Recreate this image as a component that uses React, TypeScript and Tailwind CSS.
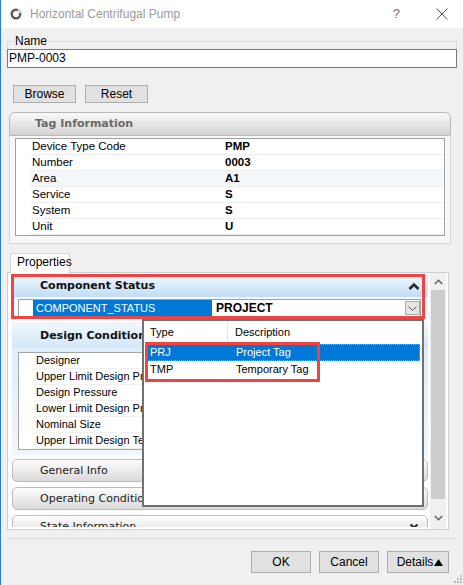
const tagRows: [string, string][] = [
  ['Device Type Code', 'PMP'],
  ['Number', '0003'],
  ['Area', 'A1'],
  ['Service', 'S'],
  ['System', 'S'],
  ['Unit', 'U'],
];

const designRows = [
  'Designer',
  'Upper Limit Design Pressure',
  'Design Pressure',
  'Lower Limit Design Pressure',
  'Nominal Size',
  'Upper Limit Design Temperature',
];

const lookupRows = [
  { type: 'PRJ', desc: 'Project Tag', selected: true },
  { type: 'TMP', desc: 'Temporary Tag', selected: false },
];

function CollapsedHeader({ title, chevron }: { title: string; chevron?: boolean }) {
  return (
    <div className="flex h-[23px] w-[416px] shrink-0 rounded-[5px] border border-[#bdbdbd] bg-linear-to-b from-[#fdfdfd] to-[#dadada] pl-[27px] font-['DejaVu_Sans',Verdana,sans-serif] text-[11px] leading-[21px] text-[#222]">
      <span>{title}</span>
      {chevron && (
        <svg className="ml-auto mr-[8px] mt-[7px]" width="10" height="10" viewBox="0 0 10 10">
          <polyline points="1.5,1.5 5,4.5 8.5,1.5" fill="none" stroke="#2a2a2a" strokeWidth="2.2" />
          <polyline points="1.5,5.5 5,8.5 8.5,5.5" fill="none" stroke="#2a2a2a" strokeWidth="2.2" />
        </svg>
      )}
    </div>
  );
}

function Button({ label, className }: { label: React.ReactNode; className: string }) {
  return (
    <div className={`flex items-center justify-center border border-[#adadad] bg-[#e1e1e1] text-[12px] ${className}`}>
      {label}
    </div>
  );
}

export default function App() {
  return (
    <div className="relative h-[585px] w-[464px] overflow-hidden border-l border-r border-l-[#2b7cd3] border-r-[#d9d9d9] bg-[#f0f0f0] font-['Liberation_Sans',Arial,sans-serif] text-black">
      {/* title bar */}
      <div className="flex h-[28px] items-center bg-white">
        <svg className="ml-[9px]" width="12" height="12" viewBox="0 0 12 12">
          <circle cx="6" cy="6" r="4.3" fill="none" stroke="#5a5a5a" strokeWidth="2.4" />
          <path d="M7.6 2 A4.3 4.3 0 0 1 10.2 5" fill="none" stroke="#d6d6d6" strokeWidth="2.6" />
        </svg>
        <span className="ml-[8px] text-[12px] text-[#9a9a9a]">Horizontal Centrifugal Pump</span>
        <span className="ml-auto text-[13px] text-[#707070]">?</span>
        <svg className="ml-[36px] mr-[15px]" width="12" height="12" viewBox="0 0 12 12">
          <path d="M0.5 0.5 L11.5 11.5 M11.5 0.5 L0.5 11.5" stroke="#555" strokeWidth="1" />
        </svg>
      </div>

      {/* name */}
      <fieldset className="ml-[6px] mt-[6px] w-[450px] border-x border-t border-[#dcdcdc]">
        <legend className="ml-[6px] px-[1px] text-[12px] leading-[14px]">Name</legend>
        <div className="-mx-px mt-px h-[19px] w-[450px] border border-[#7a7a7a] bg-white pl-[1px] text-[12px] leading-[17px]">
          PMP-0003
        </div>
      </fieldset>

      <div className="ml-[12px] mt-[17px] flex gap-[9px]">
        <Button label="Browse" className="h-[18px] w-[63px]" />
        <Button label="Reset" className="h-[18px] w-[63px]" />
      </div>

      {/* tag information */}
      <div className="ml-[8px] mt-[9px] w-[442px]">
        <div className="flex h-[24px] items-center rounded-t-[6px] border border-[#b9b9b9] bg-linear-to-b from-[#f9f9f9] to-[#d3d3d3] pl-[25px] font-['DejaVu_Sans',Verdana,sans-serif] text-[11px] font-bold text-[#6a6a6a]">
          Tag Information
        </div>
        <div className="border-x border-b border-[#d4d4d4] bg-[#f8f8f8] pb-[7px] pl-[5px] pt-[2px]">
          <div className="h-[98px] w-[430px] border border-[#a0a0a0] bg-white text-[11.5px]">
            {tagRows.map(([label, value]) => (
              <div key={label} className={`flex h-[16px] ${label === 'Area' ? 'bg-[#f5f8fb]' : ''}`}>
                <div className="w-[14px] shrink-0 bg-white" />
                <div className="flex flex-1 border-b border-[#efefef] leading-[15px]">
                  <span className="w-[195px] pl-[2px]">{label}</span>
                  <span className="font-bold">{value}</span>
                </div>
              </div>
            ))}
          </div>
        </div>
      </div>

      {/* properties tab */}
      <div className="relative z-10 ml-[9px] mt-[9px] h-[20px] w-[60px] border-x border-t border-[#d9d9d9] bg-white pl-[6px] text-[12px] leading-[16px]">
        Properties
      </div>
      <div className="-mt-px ml-[6px] flex h-[258px] w-[442px] border border-[#cfcfcf] bg-white">
        <div className="flex h-[254px] w-[421px] flex-col overflow-hidden pl-[4px] pt-[2px]">
          {/* component status */}
          <div className="h-[43px] w-[416px] shrink-0 bg-[#f3f9fe]">
            <div className="flex h-[22px] items-center bg-linear-to-b from-[#f2f8fe] to-[#c1ddf6] pl-[28px] font-['DejaVu_Sans',Verdana,sans-serif] text-[11px] font-bold text-[#111]">
              Component Status
              <svg className="ml-auto mr-[8px]" width="12" height="8" viewBox="0 0 12 8">
                <polyline points="1.5,7 6,2.5 10.5,7" fill="none" stroke="#2a2a2a" strokeWidth="2.6" />
              </svg>
            </div>
            <div className="ml-[6px] mt-[2px] flex h-[18px] w-[403px] border border-[#a0a0a0] bg-white text-[11px]">
              <div className="w-[14px] shrink-0" />
              <div className="w-[179px] shrink-0 bg-[#0078d7] pl-[3px] leading-[16px] text-white">COMPONENT_STATUS</div>
              <div className="flex-1 pl-[4px] text-[12px] font-bold leading-[16px]">PROJECT</div>
              <div className="my-px flex h-[14px] w-[15px] items-center justify-center border border-[#adadad] bg-[#e5e5e5]">
                <svg width="9" height="5" viewBox="0 0 9 5">
                  <polyline points="0.5,0.5 4.5,4.5 8.5,0.5" fill="none" stroke="#555" strokeWidth="1" />
                </svg>
              </div>
            </div>
          </div>

          {/* design conditions */}
          <div className="mt-[4px] h-[133px] w-[416px] shrink-0 bg-linear-to-b from-[#dcecfb] to-[#eef6fe]">
            <div className="flex h-[26px] items-center bg-linear-to-b from-[#f1f8fe] to-[#d3e7f9] pl-[28px] pt-[3px] font-['DejaVu_Sans',Verdana,sans-serif] text-[11px] font-bold text-[#111]">
              Design Conditions
            </div>
            <div className="ml-[6px] mt-[4px] h-[98px] w-[404px] border border-[#a5a5a5] bg-white text-[11px]">
              {designRows.map((label) => (
                <div key={label} className="flex h-[16px]">
                  <div className="w-[14px] shrink-0" />
                  <div className="flex-1 border-b border-[#efefef] pl-[3px] leading-[15px]">{label}</div>
                </div>
              ))}
            </div>
          </div>

          <div className="mt-[4px]">
            <CollapsedHeader title="General Info" />
          </div>
          <div className="mt-[5px]">
            <CollapsedHeader title="Operating Conditions" />
          </div>
          <div className="mt-[5px]">
            <CollapsedHeader title="State Information" chevron />
          </div>
        </div>

        {/* scrollbar */}
        <div className="ml-px flex w-[16px] flex-col bg-[#f0f0f0]">
          <div className="flex h-[17px] items-center justify-center">
            <svg width="9" height="6" viewBox="0 0 9 6">
              <polyline points="0.8,5 4.5,1.3 8.2,5" fill="none" stroke="#606060" strokeWidth="1.5" />
            </svg>
          </div>
          <div className="ml-[1px] h-[209px] w-[14px] bg-[#cdcdcd]" />
          <div className="flex-1" />
          <div className="mb-[3px] flex h-[17px] items-center justify-center">
            <svg width="9" height="6" viewBox="0 0 9 6">
              <polyline points="0.8,1 4.5,4.7 8.2,1" fill="none" stroke="#606060" strokeWidth="1.5" />
            </svg>
          </div>
        </div>
      </div>

      <div className="ml-[6px] mt-[8px] h-px w-[450px] bg-[#dcdcdc]" />

      <div className="ml-[250px] mt-[12px] flex gap-[8px]">
        <Button label="OK" className="h-[22px] w-[60px]" />
        <Button label="Cancel" className="h-[22px] w-[60px]" />
        <Button
          label={
            <span className="flex items-center pl-[4px]">
              Details
              <svg className="ml-[1px]" width="9" height="7" viewBox="0 0 9 7">
                <polygon points="0,7 4.5,0 9,7" fill="#000" />
              </svg>
            </span>
          }
          className="h-[22px] w-[62px]"
        />
      </div>

      {/* resize grip */}
      <svg className="absolute bottom-[2px] right-[1px]" width="9" height="9" viewBox="0 0 9 9">
        <rect x="7" y="1" width="2" height="2" fill="#b8b8b8" />
        <rect x="4" y="4" width="2" height="2" fill="#b8b8b8" />
        <rect x="7" y="4" width="2" height="2" fill="#b8b8b8" />
        <rect x="1" y="7" width="2" height="2" fill="#b8b8b8" />
        <rect x="4" y="7" width="2" height="2" fill="#b8b8b8" />
        <rect x="7" y="7" width="2" height="2" fill="#b8b8b8" />
      </svg>

      {/* lookup dropdown */}
      <div className="absolute left-[141px] top-[319px] h-[188px] w-[282px] border-2 border-[#717171] bg-white text-[11px]">
        <div className="flex h-[22px] items-center">
          <div className="flex h-full w-[84px] items-center border-r border-[#e5e5e5] pl-[6px]">Type</div>
          <div className="pl-[7px]">Description</div>
        </div>
        <div className="mt-px">
          {lookupRows.map((row) => (
            <div
              key={row.type}
              className={`mx-[2px] flex h-[17px] items-center border ${
                row.selected ? 'border-dotted border-[#f0a040] bg-[#0078d7] text-white' : 'border-transparent'
              }`}
            >
              <span className="w-[89px] pl-[3px]">{row.type}</span>
              <span>{row.desc}</span>
            </div>
          ))}
        </div>
      </div>

      {/* annotation boxes */}
      <div className="absolute left-[10px] top-[274px] h-[45px] w-[414px] border-[3px] border-[#ee4444]" />
      <div className="absolute left-[144px] top-[342px] h-[40px] w-[175px] border-[3px] border-[#ee4444]" />
    </div>
  );
}
